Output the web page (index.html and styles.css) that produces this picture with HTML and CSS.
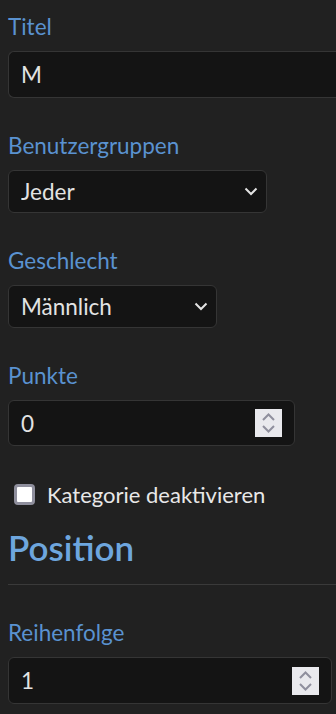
FILE: index.html
```html
<!DOCTYPE html>
<html lang="de">
<head>
    <meta charset="UTF-8">
    <meta name="viewport" content="width=device-width, initial-scale=1.0">
    <title>Kategorie bearbeiten</title>
    <link rel="stylesheet" href="styles.css">
</head>
<body>
    <form class="form">
        <div class="field">
            <label class="field-label" for="title">Titel</label>
            <input class="text-input title-input" id="title" type="text" value="M">
        </div>

        <div class="field">
            <label class="field-label" for="groups">Benutzergruppen</label>
            <div class="select-box groups-select">
                <select id="groups">
                    <option>Jeder</option>
                </select>
                <svg class="chevron" width="14" height="9" viewBox="0 0 14 9"><path d="M1.5 1.5 L7 7 L12.5 1.5"/></svg>
            </div>
        </div>

        <div class="field">
            <label class="field-label" for="gender">Geschlecht</label>
            <div class="select-box gender-select">
                <select id="gender">
                    <option>Männlich</option>
                </select>
                <svg class="chevron" width="14" height="9" viewBox="0 0 14 9"><path d="M1.5 1.5 L7 7 L12.5 1.5"/></svg>
            </div>
        </div>

        <div class="field">
            <label class="field-label" for="points">Punkte</label>
            <div class="number-box points-box">
                <input id="points" type="number" value="0">
                <span class="spinner">
                    <svg width="27" height="28" viewBox="0 0 27 28"><path d="M8 11 L13.5 5.5 L19 11"/><path d="M8 17 L13.5 22.5 L19 17"/></svg>
                </span>
            </div>
        </div>

        <label class="check-row">
            <input type="checkbox" class="check-box">
            <span>Kategorie deaktivieren</span>
        </label>

        <h2 class="section-title">Position</h2>
        <hr class="divider">

        <div class="field">
            <label class="field-label" for="order">Reihenfolge</label>
            <div class="number-box order-box">
                <input id="order" type="number" value="1">
                <span class="spinner">
                    <svg width="27" height="28" viewBox="0 0 27 28"><path d="M8 11 L13.5 5.5 L19 11"/><path d="M8 17 L13.5 22.5 L19 17"/></svg>
                </span>
            </div>
        </div>
    </form>
</body>
</html>
```

FILE: styles.css
```css
/* Allgemein */
body {
    margin: 0;
    padding: 13px 0 0 8px;
    background: #212121;
    color: #e3e3e3;
    font-family: 'Lato', 'Liberation Sans', sans-serif;
    overflow: hidden;
}

.form {
    margin: 0;
}

.field {
    margin-bottom: 34px;
}

.field-label {
    display: block;
    font-size: 22.5px;
    line-height: 28px;
    margin-bottom: 10px;
    color: #5a92d0;
}

/* Eingabefelder */
.text-input,
.select-box,
.number-box {
    box-sizing: border-box;
    background: #141414;
    border: 1px solid #353535;
    border-radius: 6px;
    color: #e3e3e3;
    font-family: inherit;
    font-size: 22.5px;
}

.text-input {
    display: block;
    height: 47px;
    padding: 0 12px;
    outline: none;
}

/* Feld läuft rechts aus dem Bild */
.title-input {
    width: 328px;
    border-right: none;
    border-radius: 6px 0 0 6px;
}

.select-box {
    display: flex;
    align-items: center;
    height: 43px;
    padding: 0 8px 0 12px;
}

.select-box select {
    flex: 1;
    appearance: none;
    -webkit-appearance: none;
    background: transparent;
    border: none;
    color: inherit;
    font: inherit;
    padding: 0;
    outline: none;
}

.chevron {
    fill: none;
    stroke: #e3e3e3;
    stroke-width: 2;
}

.groups-select {
    width: 259px;
}

.gender-select {
    width: 209px;
}

.number-box {
    display: flex;
    align-items: center;
    height: 46px;
    padding: 0 12px;
}

.number-box input {
    flex: 1;
    min-width: 0;
    appearance: textfield;
    -moz-appearance: textfield;
    background: transparent;
    border: none;
    color: inherit;
    font: inherit;
    padding: 0;
    outline: none;
}

.number-box input::-webkit-inner-spin-button,
.number-box input::-webkit-outer-spin-button {
    -webkit-appearance: none;
    margin: 0;
}

.spinner {
    display: flex;
    width: 27px;
    height: 28px;
    background: #e9e9ed;
}

.spinner svg {
    fill: none;
    stroke: #8f8f9d;
    stroke-width: 2;
}

.points-box {
    width: 287px;
}

.order-box {
    width: 324px;
    height: 47px;
}

/* Checkbox */
.check-row {
    display: flex;
    align-items: center;
    gap: 12px;
    height: 21px;
    margin: 38px 0 0 6px;
    font-size: 22px;
    color: #e8e8e8;
}

.check-box {
    appearance: none;
    -webkit-appearance: none;
    box-sizing: border-box;
    width: 21px;
    height: 21px;
    margin: 0;
    background: #fff;
    border: 3px solid #8f8f9d;
    border-radius: 4px;
}

/* Abschnitt */
.section-title {
    margin: 20px 0 0;
    font-size: 35px;
    line-height: 44px;
    font-weight: 600;
    color: #6ea6de;
}

.divider {
    width: 328px;
    margin: 15px 0 34px;
    border: none;
    border-top: 1px solid #3a3a3a;
}
```
